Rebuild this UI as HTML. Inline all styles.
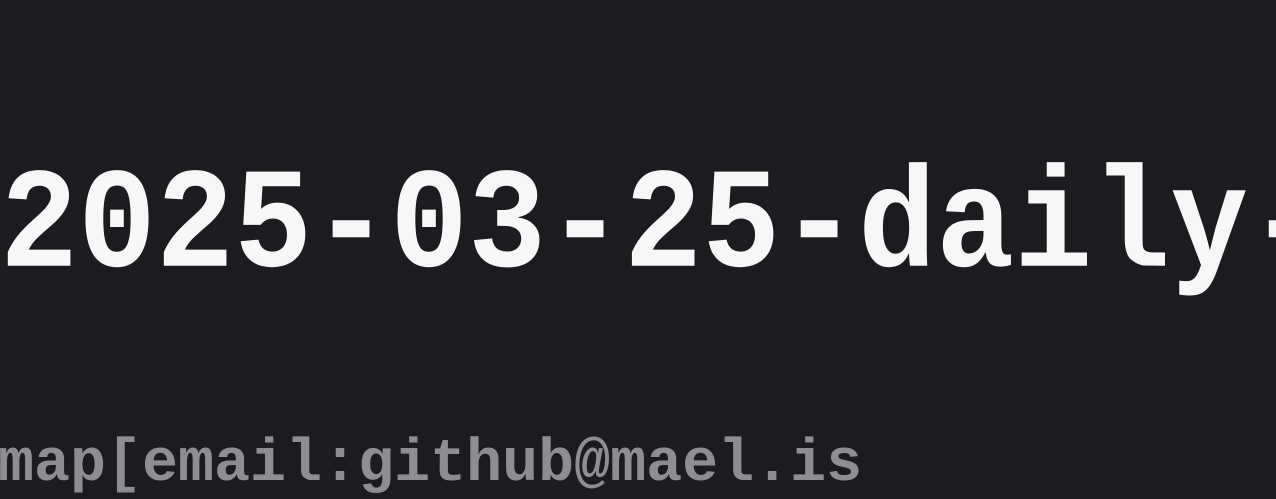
<!DOCTYPE html>
<html><head><meta charset="utf-8"><style>
html,body{margin:0;padding:0;width:1276px;height:498px;overflow:hidden;background:#1b1c20;}
.t{position:absolute;white-space:nowrap;font-family:"Liberation Mono",monospace;font-weight:bold;line-height:1;}
#a{left:0;top:168px;font-size:130px;color:#f7f7f7;transform:scaleY(1.1);transform-origin:0 100px;}
#b{left:-2px;top:435px;font-size:60px;color:#8c8e93;}
</style></head><body>
<div class="t" id="a">2025-03-25-daily-</div>
<div class="t" id="b">map[email:github@mael.is</div>
</body></html>
